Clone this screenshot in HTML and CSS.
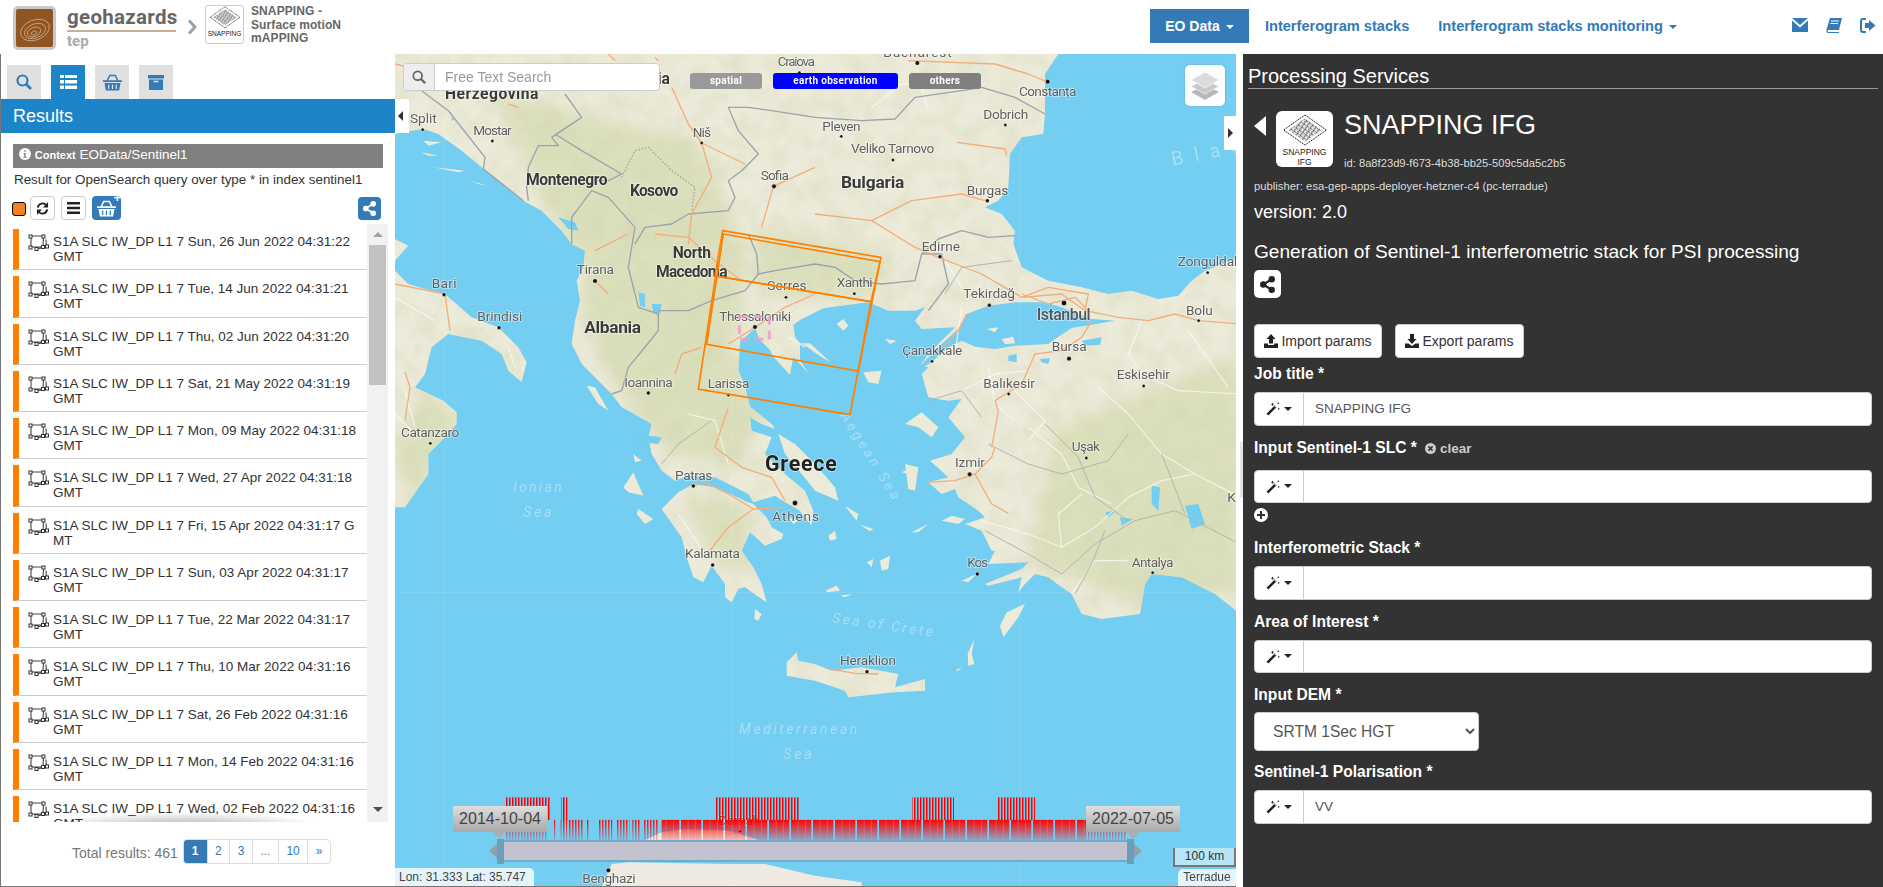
FILE: index.html
```html
<!DOCTYPE html>
<html lang="en">
<head>
<meta charset="utf-8">
<title>Geohazards TEP - SNAPPING</title>
<link rel="stylesheet" href="styles.css">
</head>
<body>
<svg class="defs" width="0" height="0" aria-hidden="true">
  <defs>
    <symbol id="i-wand" viewBox="0 0 16 16"><path d="M1.5 14.5 10.5 5.5" stroke="currentColor" stroke-width="2.8" fill="none"/><path d="M9.5 6.5 11 5" stroke="#fff" stroke-width="1.2"/><path d="M7 1.5 7.6 3 9 3.5 7.6 4 7 5.5 6.4 4 5 3.5 6.4 3ZM13 1l.4 1 1 .4-1 .4-.4 1-.4-1-1-.4 1-.4ZM13.5 7l.4 1 1 .4-1 .4-.4 1-.4-1-1-.4 1-.4Z" fill="currentColor"/></symbol>
    <symbol id="i-poly" viewBox="0 0 21 17"><path d="M3 2H15.5L15 13H3ZM18 5.500 18.500 13 8 15" fill="none" stroke="#444" stroke-width="1.100"/><g fill="#fff" stroke="#333" stroke-width="1"><rect x="1" y="1" width="3" height="3"/><rect x="14" y="1" width="3" height="3"/><rect x="1" y="12" width="3" height="3"/><rect x="13.500" y="11.500" width="3" height="3"/><rect x="7" y="13.500" width="3" height="3"/><rect x="17.500" y="11" width="3" height="3"/></g></symbol>
    <symbol id="i-share" viewBox="0 0 16 16"><path d="M12 3 4 8l8 5" stroke="currentColor" stroke-width="2" fill="none"/><circle cx="12" cy="3" r="3" fill="currentColor"/><circle cx="4" cy="8" r="3" fill="currentColor"/><circle cx="12" cy="13" r="3" fill="currentColor"/></symbol>
    <symbol id="i-basket" viewBox="0 0 20 18"><path d="M4.500 7 7 1.500h6L15.500 7" fill="none" stroke="currentColor" stroke-width="1.500"/><path d="M0 6.500H20V8.500H0ZM1.500 9.500H18.500L17 17.500H3Z" fill="currentColor"/><path d="M6 11V16M10 11V16M14 11V16" stroke="var(--basket-gap,#e0e0e0)" stroke-width="1.300"/></symbol>
    <symbol id="i-logo" viewBox="0 0 100 70"><path d="M50 2 94 33 50 64 6 33Z" fill="#fff" stroke="#111" stroke-width="2" stroke-dasharray="3 1.500"/><path d="M50 9 84 33 50 57 16 33Z" fill="url(#lattice)"/></symbol>
    <pattern id="lattice" width="8" height="8" patternUnits="userSpaceOnUse" patternTransform="rotate(35)"><path d="M0 1.500H5M1 5.500H8M3 3V7" stroke="#111" stroke-width="1.300" fill="none"/></pattern>
  </defs>
</svg>

<header class="topbar">
  <div class="brand">
    <div class="brand-logo">
      <svg viewBox="0 0 36 36" width="36" height="36"><g fill="none" stroke="#d9b799" stroke-width=".7"><ellipse cx="18" cy="20" rx="15" ry="10" transform="rotate(-22 18 20)"/><ellipse cx="18" cy="21" rx="11" ry="7" transform="rotate(-22 18 21)"/><ellipse cx="17" cy="22" rx="7" ry="4.500" transform="rotate(-22 17 22)"/><ellipse cx="17" cy="23" rx="3" ry="1.800" transform="rotate(-22 17 23)"/></g></svg>
    </div>
    <div class="brand-name">
      <div class="brand-geo">geohazards</div>
      <div class="brand-tep">tep</div>
    </div>
    <svg class="brand-chev" viewBox="0 0 10 16" width="10" height="16"><path d="M2 1.500 8 8 2 14.500" fill="none" stroke="#9aa3ab" stroke-width="3"/></svg>
    <div class="app-logo">
      <svg viewBox="0 0 100 70" width="34" height="24"><use href="#i-logo"/></svg>
      <span class="app-logo-t">SNAPPING</span>
    </div>
    <div class="app-name">SNAPPING -<br>Surface motioN<br>mAPPING</div>
  </div>
  <nav class="nav">
    <a class="nav-btn">EO Data <i class="caret"></i></a>
    <a class="nav-link">Interferogram stacks</a>
    <a class="nav-link nav-link2">Interferogram stacks monitoring <i class="caret"></i></a>
    <span class="nav-icons">
      <svg viewBox="0 0 16 14" width="16" height="14"><path d="M0 0H16L8 7ZM0 2.500 8 9.500 16 2.500V14H0Z" fill="#337ab7"/></svg>
      <svg viewBox="0 0 16 15" width="16" height="15"><path d="M4 0H16L13 12H2.500Q1 12 2 14H13V15H1.500Q-.5 13.500 1 10Z" fill="#337ab7"/><path d="M5 3H13M4.500 5.500H12" stroke="#fff"/></svg>
      <svg viewBox="0 0 16 15" width="16" height="15"><path d="M6 1H3Q1 1 1 3V12Q1 14 3 14H6" fill="none" stroke="#337ab7" stroke-width="2"/><path d="M9 2 15.500 7.500 9 13V10H5V5H9Z" fill="#337ab7"/></svg>
    </span>
  </nav>
</header>

<main class="main">
  <section class="left">
    <div class="tabs">
      <span class="tab"><svg viewBox="0 0 16 16" width="16" height="16"><circle cx="6.500" cy="6.500" r="5" fill="none" stroke="#337ab7" stroke-width="2.200"/><path d="M10 10 15 15" stroke="#337ab7" stroke-width="2.600"/></svg></span>
      <span class="tab tab-on"><svg viewBox="0 0 17 14" width="17" height="14"><path d="M0 0H4V3H0ZM5 0H17V3H5ZM0 5H4V8.500H0ZM5 5H17V8.500H5ZM0 10.500H4V14H0ZM5 10.500H17V14H5Z" fill="#fff"/></svg></span>
      <span class="tab tab-blue"><svg width="19" height="17"><use href="#i-basket"/></svg></span>
      <span class="tab"><svg viewBox="0 0 16 15" width="16" height="15"><path d="M0 0H16V3.500H0ZM1 4.500H15V15H1Z" fill="#337ab7"/><path d="M5.500 6.500H10.500" stroke="#e0e0e0" stroke-width="1.500"/></svg></span>
    </div>
    <h2 class="results-bar">Results</h2>
    <div class="context"><svg viewBox="0 0 16 16" width="12" height="12"><circle cx="8" cy="8" r="8" fill="#fff"/><path d="M6 6.500H9V12H10.500V13H5.500V12H7V7.500H6ZM7 3H9V5H7Z" fill="#808080"/></svg> <b>Context</b> <span>EOData/Sentinel1</span></div>
    <p class="query">Result for OpenSearch query over type * in index sentinel1</p>
    <div class="toolbar">
      <span class="check"></span>
      <span class="tbtn"><svg viewBox="0 0 14 14" width="13" height="13"><path d="M2 6A5 5 0 0 1 11 3.500M12 8A5 5 0 0 1 3 10.500" fill="none" stroke="#222" stroke-width="2"/><path d="M13 0V6H7.500ZM1 14V8H6.500Z" fill="#222"/></svg></span>
      <span class="tbtn"><svg viewBox="0 0 13 12" width="13" height="12"><path d="M0 0H13V2.400H0ZM0 4.800H13V7.200H0ZM0 9.600H13V12H0Z" fill="#222"/></svg></span>
      <span class="tbtn-basket"><svg width="19" height="17"><use href="#i-basket"/></svg><b>+</b></span>
      <span class="tbtn-share"><svg width="15" height="15"><use href="#i-share"/></svg></span>
    </div>
    <div class="listwrap">
      <ul class="list">
        <li><svg width="21" height="17"><use href="#i-poly"/></svg><span>S1A SLC IW_DP L1 7 Sun, 26 Jun 2022 04:31:22<br>GMT</span></li>
        <li><svg width="21" height="17"><use href="#i-poly"/></svg><span>S1A SLC IW_DP L1 7 Tue, 14 Jun 2022 04:31:21<br>GMT</span></li>
        <li><svg width="21" height="17"><use href="#i-poly"/></svg><span>S1A SLC IW_DP L1 7 Thu, 02 Jun 2022 04:31:20<br>GMT</span></li>
        <li><svg width="21" height="17"><use href="#i-poly"/></svg><span>S1A SLC IW_DP L1 7 Sat, 21 May 2022 04:31:19<br>GMT</span></li>
        <li><svg width="21" height="17"><use href="#i-poly"/></svg><span>S1A SLC IW_DP L1 7 Mon, 09 May 2022 04:31:18<br>GMT</span></li>
        <li><svg width="21" height="17"><use href="#i-poly"/></svg><span>S1A SLC IW_DP L1 7 Wed, 27 Apr 2022 04:31:18<br>GMT</span></li>
        <li><svg width="21" height="17"><use href="#i-poly"/></svg><span>S1A SLC IW_DP L1 7 Fri, 15 Apr 2022 04:31:17 G<br>MT</span></li>
        <li><svg width="21" height="17"><use href="#i-poly"/></svg><span>S1A SLC IW_DP L1 7 Sun, 03 Apr 2022 04:31:17<br>GMT</span></li>
        <li><svg width="21" height="17"><use href="#i-poly"/></svg><span>S1A SLC IW_DP L1 7 Tue, 22 Mar 2022 04:31:17<br>GMT</span></li>
        <li><svg width="21" height="17"><use href="#i-poly"/></svg><span>S1A SLC IW_DP L1 7 Thu, 10 Mar 2022 04:31:16<br>GMT</span></li>
        <li><svg width="21" height="17"><use href="#i-poly"/></svg><span>S1A SLC IW_DP L1 7 Sat, 26 Feb 2022 04:31:16<br>GMT</span></li>
        <li><svg width="21" height="17"><use href="#i-poly"/></svg><span>S1A SLC IW_DP L1 7 Mon, 14 Feb 2022 04:31:16<br>GMT</span></li>
        <li><svg width="21" height="17"><use href="#i-poly"/></svg><span>S1A SLC IW_DP L1 7 Wed, 02 Feb 2022 04:31:16<br>GMT</span></li>
      </ul>
      <div class="sbar"><i class="sb-up"></i><i class="sb-thumb"></i><i class="sb-down"></i></div>
    </div>
    <div class="pager-row">
      <span class="total">Total results: 461</span>
      <span class="pager"><a class="on">1</a><a>2</a><a>3</a><a class="dim">...</a><a>10</a><a>»</a></span>
    </div>
  </section>

  <section class="map">
    <svg class="basemap" viewBox="0 0 2535 2499" width="841" height="833" preserveAspectRatio="xMinYMin slice">
      <defs>
        <filter id="blur" x="-20%" y="-20%" width="140%" height="140%"><feGaussianBlur stdDeviation="22"/></filter>
        <filter id="noise" x="0" y="0" width="100%" height="100%">
          <feTurbulence type="fractalNoise" baseFrequency=".016" numOctaves="4" seed="7"/>
          <feColorMatrix values="0 0 0 0 .62  0 0 0 0 .66  0 0 0 0 .42  1.800 0 0 0 -.72"/>
        </filter>
        <clipPath id="landclip">
          <use href="#mainland"/><use href="#pelop"/><use href="#italy"/><use href="#crete"/>
        </clipPath>
        <pattern id="sparse" width="9" height="20" patternUnits="userSpaceOnUse"><rect width="4.500" height="20" fill="#f00"/></pattern>
        <pattern id="dense" width="66" height="20" patternUnits="userSpaceOnUse"><rect width="61" height="20" fill="#f00"/><rect x="20" width="3" height="20" fill="#e33"/><rect x="42" width="3" height="20" fill="#e33"/></pattern>
        <linearGradient id="fade" x1="0" y1="0" x2="0" y2="1"><stop offset="0" stop-color="#fff"/><stop offset="1" stop-color="#fff" stop-opacity=".1"/></linearGradient>
        <mask id="fademask" maskUnits="userSpaceOnUse" x="0" y="2290" width="2535" height="80"><rect y="2297" width="2535" height="68" fill="url(#fade)"/></mask>
      </defs>

      <rect class="sea" width="2535" height="2499"/>

      <g class="land">
        <path id="mainland" d="M0 0H1990L1950 60 1950 180 1945 240 1880 250 1845 300 1840 400 1810 440 1770 460 1820 480 1860 530 1855 570 1880 640 1960 680 2060 700 2140 720 2210 710 2290 735 2350 725 2390 680 2430 650 2535 610V1680L2460 1620 2360 1570 2270 1560 2250 1590 2235 1680 2120 1695 2060 1680 2030 1620 2000 1600 1960 1570 1920 1560 1890 1590 1870 1615 1880 1570 1780 1595 1770 1590 1880 1545 1900 1525 1780 1530 1800 1490 1790 1490 1760 1430 1710 1410 1770 1390 1750 1370 1690 1330 1680 1305 1640 1320 1600 1285 1660 1270 1605 1220 1670 1200 1710 1150 1660 1090 1700 1035 1660 1040 1600 1030 1580 960 1600 940 1575 935 1600 900 1650 850 1680 820 1580 825 1560 800 1590 760 1560 770 1480 770 1420 745 1395 748 1355 753 1285 763 1215 798 1195 813 1200 848 1215 868 1235 878 1285 913 1305 923 1245 868 1215 868 1215 918 1240 958 1195 908 1185 963 1135 908 1125 888 1095 858 1080 823 1035 863 1030 948 1050 998 1065 1058 1130 1110 1140 1125 1100 1110 1065 1090 1070 1130 1130 1150 1110 1200 1170 1260 1230 1310 1255 1370 1250 1415 1215 1370 1170 1345 1140 1325 1075 1345 1060 1320 960 1270 880 1265 840 1280 800 1250 770 1200 760 1150 770 1110 700 1070 680 1060 650 1020 620 990 560 930 530 870 540 800 555 740 545 680 565 640 570 590 530 570 500 530 440 470 385 440 310 380 260 340 200 290 130 240 85 225 50 230 0 240Z"/>
        <path id="pelop" d="M1075 1350 1115 1390 1130 1420 1165 1440 1160 1455 1110 1475 1065 1435 1040 1490 1075 1540 1100 1590 1115 1645 1085 1625 1050 1600 1030 1605 1010 1645 990 1630 990 1590 950 1535 925 1585 895 1570 875 1510 860 1450 800 1365 850 1315 895 1290 960 1300 1060 1345Z"/>
        <path id="italy" d="M0 650 40 690 110 710 150 720 230 790 310 820 370 880 395 925 380 985 340 950 320 900 260 860 160 840 110 880 90 960 60 1000 145 1040 185 1075 185 1110 130 1170 100 1200 100 1260 30 1360H0ZM0 555 40 575 0 620Z"/>
        <path id="crete" d="M1175 1825 1205 1795 1210 1820 1260 1830 1310 1850 1400 1840 1510 1860 1500 1900 1590 1875 1590 1910 1500 1915 1360 1930 1350 1910 1260 1880 1175 1865Z"/>
        <path d="M575 995 600 1000 640 1070 610 1050ZM715 1255 745 1325 700 1315 685 1300ZM715 1200 740 1220 720 1225ZM730 1365 775 1395 750 1410 725 1380ZM1080 1665 1100 1680 1090 1700 1078 1695ZM1530 1230 1570 1240 1560 1310 1540 1305ZM1530 1110 1580 1075 1630 1120 1610 1150 1570 1120ZM1405 955 1460 950 1450 990 1420 985ZM1325 810 1345 795 1360 815 1345 830ZM1470 855 1505 860 1485 870ZM1640 1400 1670 1385 1710 1395 1690 1410ZM1550 1435 1600 1410 1570 1435ZM1700 1580 1745 1560 1720 1585ZM1455 1520 1485 1505 1480 1545 1460 1550ZM1415 1525 1435 1515 1430 1540ZM1350 1355 1390 1380 1385 1400 1365 1375ZM1395 1412 1435 1425 1425 1432ZM1890 1650 1870 1690 1825 1750 1815 1715 1835 1675ZM1738 1755 1730 1800 1738 1830 1720 1835 1718 1800ZM1680 1850 1700 1840 1690 1850ZM1150 1140 1200 1170 1260 1230 1320 1300 1330 1340 1295 1325 1260 1310 1220 1260 1170 1200ZM85 260 140 265 100 275ZM80 295 130 305 100 305ZM115 340 210 350 190 355ZM225 380 280 395 250 390ZM1520 1255 1540 1245 1540 1260ZM1300 1445 1320 1430 1325 1455 1305 1460ZM1180 1390 1210 1400 1195 1410ZM1290 1610 1325 1595 1335 1610 1300 1615ZM1335 1625 1370 1620 1350 1630Z"/>
        <path class="libya" d="M650 2430 700 2425 1000 2430 1110 2430 1260 2465 1400 2485V2499H620ZM735 2365 800 2335 870 2325 1000 2330 1100 2360 1110 2370H730Z"/>
      </g>

      <g clip-path="url(#landclip)">
        <g class="terrain" filter="url(#blur)">
          <path d="M300 120 900 260 1060 600 1010 900 1100 1060 1030 1250 800 1180 650 980 560 800 580 640 450 460Z"/>
          <path d="M1080 520 1480 610 1440 720 1100 720Z"/>
          <path d="M1980 1130 2535 900V1600L2250 1660 1900 1520Z"/>
          <path d="M860 1330 1060 1350 1060 1560 960 1500Z"/>
          <path d="M90 1000 190 1100 60 1350 0 1200Z"/>
        </g>
        <rect class="noise" width="2535" height="2499" filter="url(#noise)"/>
      </g>

      <path class="sea" d="M1780 755 1860 745 1950 745 2000 760 2090 795 2160 800 2090 812 2030 822 1980 855 1960 870 1860 875 1800 885 1740 878 1700 860 1660 880 1610 925 1585 940 1575 935 1640 870 1690 825 1715 780ZM720 1140 800 1150 790 1170 730 1165ZM730 715 750 720 750 760 735 755ZM770 750 800 750 795 780 775 775ZM490 490 540 505 550 530 520 525ZM170 190 180 195 170 200ZM2270 1295 2295 1300 2290 1370 2270 1350ZM2370 1355 2410 1350 2430 1410 2390 1425ZM2130 1375 2165 1370 2140 1390ZM2175 1390 2215 1395 2180 1415ZM2060 860 2120 850 2115 872 2070 875ZM1935 915 1965 912 1960 930 1940 925ZM1840 905 1865 900 1865 925 1840 920Z"/>
      <path class="land-fill" d="M1775 825 1810 820 1800 835ZM1820 855 1855 848 1860 868 1830 870Z"/>

      <g class="minor">
        <path d="M1650 620 1700 700M1700 760 1680 900M1780 940 1800 1050 1860 1100M2110 1000 2200 1080 2300 1200 2400 1260M1900 1120 2000 1200 2050 1300 2150 1350M1760 1400 1900 1440 2000 1480 2100 1420 2200 1330 2300 1280 2400 1260 2535 1330M2030 1620 2100 1520 2200 1520M1850 1000 1950 1100 1900 1160M2240 800 2200 900 2240 960 2350 1010 2535 1020M2380 830 2450 930 2500 1000M2000 1480 1990 1380 2060 1320M880 1080 960 1100 1000 1230M1180 850 1230 880M1700 1010 1800 960 1900 950M1430 160 1520 90 1660 100M1570 70 1600 170M0 730 120 800M0 1080 60 1140M30 1010 60 1120M340 880 360 940M850 1380 930 1500"/>
      </g>

      <g class="border">
        <path d="M80 110 160 170 215 240 270 310 265 345 310 380 385 440M510 120 560 190 500 230 470 250 490 275 430 275 400 340 395 400 400 440M480 240 560 290 680 360 640 380 590 380M530 570 530 490 590 410 640 430 720 520 700 640 730 760 790 780 790 830 700 940 680 1010 650 1020M720 570 750 520 830 510 880 480 1000 470 1020 430 1000 380 1040 350 1090 300 1030 230 1000 160 1060 160 1130 170 1260 190 1400 200 1500 195 1560 130 1700 110 1760 100 1860 130 1950 180M790 770 880 770 950 740 1050 710 1090 660 1085 600 1060 540M1090 660 1140 650 1260 630 1320 640 1380 680 1460 690 1560 680 1580 600 1640 600 1660 690 1600 770M1580 600 1630 555 1700 530 1780 550 1860 545"/>
        <path class="dash" d="M680 370 720 290 760 280 830 350 900 400 890 470"/>
        <path class="prov" d="M1770 1430 1900 1500 2000 1560 2100 1470 2220 1400 2340 1370 2535 1470M1950 1110 2050 1210 2100 1330 2200 1400M2300 1200 2370 1380M1900 1230 2000 1260 2140 1220 2200 1140M1780 1170 1900 1230M2130 1430 2090 1530 2040 1620M1600 1040 1700 1010 1760 1090M800 1230 850 1170 950 1100M1650 720 1700 640 1850 620"/>
      </g>

      <g class="road">
        <path d="M1135 397 1100 520M920 267 950 370 890 480 880 570M920 267 1050 330M830 100 880 210 920 267M0 690 150 720 165 830M700 540 600 590M1135 397 1260 340M640 0 660 20M780 10 790 20M1000 870 1080 820 1170 760 1260 720M920 880 860 900 840 960M780 540 880 550 960 620 1040 680M600 680 640 720M1260 480 1430 500 1560 580 1630 610 1760 660 1880 730 2000 720 2070 770 2170 790 2260 800 2340 780 2410 800 2535 810M1430 500 1550 440 1700 420 1770 440M1540 20 1800 30 1900 60 1960 85M1685 265 1830 285 1835 305M1880 990 1920 900 2000 890 2060 850 2090 800M1790 1180 1810 1070 1800 1040 1880 990M1600 1285 1680 1280 1740 1260 1790 1210 1800 1180M1740 1260 1790 1350 1840 1378M1715 780 1690 830 1645 880M1170 1360 1075 1365 1000 1320 930 1285 895 1295M1075 1365 1000 1420 960 1470 945 1490M1305 1845 1380 1858 1450 1860M30 955 45 1000 30 1100M1000 1060 960 1180 1040 1240 1130 1270 1170 1340M0 30 80 50M340 150 370 160M1880 720 1960 750 2040 730 2080 770M1880 730 1960 700 2080 720 2070 770"/>
      </g>

      <g class="grid"><path d="M150 0V2499M1010 0V2499M1877 0V2499M0 750H2535M0 1615H2535M0 2480H2535"/></g>

      <g class="names">
        <text class="city" x="1148" y="35" textLength="112">Craiova</text>
        <text class="city" x="1465" y="8" textLength="205">Bucharest</text>
        <text class="ctry" x="690" y="91" textLength="135">Serbia</text>
        <text class="ctry" x="150" y="135" textLength="280">Herzegovina</text>
        <text class="city" x="45" y="208" textLength="80">Split</text>
        <text class="city" x="235" y="243" textLength="115">Mostar</text>
        <text class="city" x="893" y="248" textLength="55">Niš</text>
        <text class="ctry" x="393" y="393" textLength="245">Montenegro</text>
        <text class="ctry" x="705" y="425" textLength="145">Kosovo</text>
        <text class="city" x="1097" y="377" textLength="85">Sofia</text>
        <text class="ctry" x="833" y="612" textLength="115">North</text>
        <text class="ctry" x="783" y="668" textLength="215">Macedonia</text>
        <text class="city" x="545" y="660" textLength="112">Tirana</text>
        <text class="city" x="110" y="703" textLength="75">Bari</text>
        <text class="city" x="247" y="802" textLength="135">Brindisi</text>
        <text class="ctry ctry-l" x="568" y="838" textLength="170">Albania</text>
        <text class="city" x="688" y="998" textLength="145">Ioannina</text>
        <text class="city" x="938" y="1003" textLength="125">Larissa</text>
        <text class="city" x="18" y="1148" textLength="175">Catanzaro</text>
        <text class="city" x="1117" y="708" textLength="118">Serres</text>
        <text class="city" x="973" y="800" textLength="215">Thessaloniki</text>
        <text class="city" x="1872" y="127" textLength="172">Constanța</text>
        <text class="city" x="1765" y="195" textLength="135">Dobrich</text>
        <text class="city" x="1282" y="230" textLength="115">Pleven</text>
        <text class="city" x="1368" y="298" textLength="250">Veliko Tarnovo</text>
        <text class="ctry ctry-l" x="1338" y="402" textLength="190">Bulgaria</text>
        <text class="city" x="1715" y="422" textLength="125">Burgas</text>
        <text class="city" x="1580" y="590" textLength="115">Edirne</text>
        <text class="city" x="1325" y="700" textLength="108">Xanthi</text>
        <text class="city" x="1705" y="733" textLength="155">Tekirdağ</text>
        <text class="big" x="1925" y="797" textLength="162">Istanbul</text>
        <text class="city" x="2348" y="637" textLength="190">Zonguldak</text>
        <text class="city" x="2373" y="783" textLength="80">Bolu</text>
        <text class="city" x="1522" y="902" textLength="180">Çanakkale</text>
        <text class="city" x="1970" y="892" textLength="105">Bursa</text>
        <text class="city" x="2165" y="975" textLength="160">Eskisehir</text>
        <text class="city" x="1765" y="1002" textLength="155">Balıkesir</text>
        <text class="city" x="2030" y="1192" textLength="85">Uşak</text>
        <text class="city" x="840" y="1278" textLength="112">Patras</text>
        <text class="city" x="870" y="1512" textLength="165">Kalamata</text>
        <text class="city" x="1132" y="1400" textLength="140">Athens</text>
        <text class="greece" x="1110" y="1250" textLength="215">Greece</text>
        <text class="city" x="1680" y="1240" textLength="90">Izmir</text>
        <text class="city" x="1717" y="1540" textLength="62">Kos</text>
        <text class="city" x="2210" y="1540" textLength="125">Antalya</text>
        <text class="city" x="2497" y="1345" textLength="110">Konya</text>
        <text class="city" x="1335" y="1834" textLength="168">Heraklion</text>
        <text class="city" x="562" y="2486" textLength="160">Benghazi</text>
        <text class="city" x="970" y="2312" textLength="125">Darnah</text>
        <text class="wsea" x="355" y="1315" textLength="145">Ionian</text>
        <text class="wsea" x="385" y="1388" textLength="85">Sea</text>
        <text class="wsea" x="1032" y="2040" textLength="355">Mediterranean</text>
        <text class="wsea" x="1165" y="2115" textLength="85">Sea</text>
        <text class="wsea" x="0" y="0" textLength="305" transform="translate(1310 1705) rotate(8)">Sea of Crete</text>
        <text class="wsea" x="0" y="0" textLength="300" transform="translate(1335 1085) rotate(58)">Aegean Sea</text>
        <text class="wsea wsea-l" x="0" y="0" textLength="275" transform="translate(2333 335) rotate(-11)">Black</text>
      </g>

      <g class="dots">
        <circle cx="83" cy="227" r="5"/><circle cx="292" cy="261" r="5"/><circle cx="920" cy="267" r="5"/><circle cx="1137" cy="397" r="7"/><circle cx="600" cy="681" r="7"/><circle cx="147" cy="722" r="6"/><circle cx="312" cy="821" r="6"/><circle cx="760" cy="1017" r="6"/><circle cx="1000" cy="1023" r="5"/><circle cx="106" cy="1168" r="5"/><circle cx="1173" cy="730" r="5"/><circle cx="1080" cy="819" r="7"/><circle cx="1213" cy="56" r="5"/><circle cx="1567" cy="27" r="7"/><circle cx="1958" cy="83" r="7"/><circle cx="1831" cy="213" r="5"/><circle cx="1339" cy="247" r="5"/><circle cx="1494" cy="318" r="5"/><circle cx="1777" cy="440" r="6"/><circle cx="1635" cy="608" r="6"/><circle cx="1378" cy="719" r="5"/><circle cx="1783" cy="754" r="6"/><circle cx="2007" cy="747" r="8"/><circle cx="2438" cy="656" r="5"/><circle cx="2411" cy="800" r="5"/><circle cx="1611" cy="922" r="5"/><circle cx="2022" cy="914" r="7"/><circle cx="2246" cy="996" r="5"/><circle cx="1841" cy="1020" r="5"/><circle cx="895" cy="1296" r="6"/><circle cx="953" cy="1533" r="6"/><circle cx="1200" cy="1347" r="8"/><circle cx="1724" cy="1261" r="7"/><circle cx="1747" cy="1560" r="6"/><circle cx="2273" cy="1556" r="5"/><circle cx="1416" cy="1853" r="6"/><circle cx="640" cy="2449" r="7"/><circle cx="1035" cy="2332" r="5"/><circle cx="2074" cy="1212" r="5"/>
      </g>

      <g class="fp">
        <path class="fp-box" d="M1033 788H1123V856H1033Z"/>
        <path d="M983 530 1458 610 1428 743 960 666Z"/>
        <path d="M985 540 1455 623 1390 951 935 871Z"/>
        <path d="M962 666 1428 743 1365 1082 910 1005Z"/>
      </g>

      <g class="bars-tall">
        <rect x="333" y="2230" width="132" height="68"/><rect x="498" y="2230" width="20" height="68"/><rect x="960" y="2230" width="255" height="68"/><rect x="1551" y="2230" width="126" height="68"/><rect x="1807" y="2230" width="113" height="68"/>
      </g>
      <g mask="url(#fademask)">
        <g class="bars-sp">
          <rect x="333" y="2297" width="122" height="68"/><rect x="475" y="2297" width="6" height="68"/><rect x="497" y="2297" width="20" height="68"/><rect x="520" y="2297" width="47" height="68"/><rect x="575" y="2297" width="6" height="68"/><rect x="610" y="2297" width="42" height="68"/><rect x="665" y="2297" width="38" height="68"/><rect x="712" y="2297" width="24" height="68"/><rect x="745" y="2297" width="46" height="68"/><rect x="2070" y="2297" width="125" height="68"/>
        </g>
        <rect class="bars-de" x="800" y="2297" width="1270" height="68"/>
      </g>
    </svg>

    <div class="search">
      <span class="search-ic"><svg viewBox="0 0 16 16" width="14" height="14"><circle cx="6.500" cy="6.500" r="5" fill="none" stroke="#666" stroke-width="2"/><path d="M10 10 15 15" stroke="#666" stroke-width="2.500"/></svg></span>
      <span class="search-in">Free Text Search</span>
    </div>
    <div class="tags">
      <span class="tag tag-s">spatial</span>
      <span class="tag tag-e">earth observation</span>
      <span class="tag tag-o">others</span>
    </div>
    <button class="toggle toggle-l" aria-label="collapse left"></button>
    <button class="toggle toggle-r" aria-label="collapse right"></button>
    <div class="layers">
      <svg viewBox="0 0 30 30" width="30" height="30"><path d="M15 14 29 21 15 29 1 21Z" fill="#b8b8b8"/><path d="M15 8 29 15.500 15 23 1 15.500Z" fill="#c9c9c9" stroke="#fff" stroke-width=".6"/><path d="M15 1 29 9 15 17 1 9Z" fill="#dcdcdc" stroke="#fff" stroke-width=".6"/></svg>
    </div>

    <div class="tl-label tl-label-a">2014-10-04</div>
    <div class="tl-label tl-label-b">2022-07-05</div>
    <div class="tl-bar"></div>
    <i class="tl-handle tl-handle-a"></i>
    <i class="tl-handle tl-handle-b"></i>
    <i class="tl-arrow tl-arrow-a"></i>
    <i class="tl-arrow tl-arrow-b"></i>
    <div class="coords">Lon: 31.333 Lat: 35.747</div>
    <div class="scale">100 km</div>
    <div class="attr">Terradue</div>
  </section>

  <div class="split"><i></i></div>

  <section class="right">
    <h3 class="ps-title">Processing Services</h3>
    <div class="svc">
      <svg class="svc-back" viewBox="0 0 12 20" width="12" height="20"><path d="M12 0V20L0 10Z" fill="#fff"/></svg>
      <div class="svc-icon">
        <svg viewBox="0 0 100 70" width="50" height="35"><use href="#i-logo"/></svg>
        <span>SNAPPING<br>IFG</span>
      </div>
      <div class="svc-head">
        <div class="svc-name">SNAPPING IFG</div>
        <div class="svc-id">id: 8a8f23d9-f673-4b38-bb25-509c5da5c2b5</div>
      </div>
    </div>
    <div class="publisher">publisher: esa-gep-apps-deployer-hetzner-c4 (pc-terradue)</div>
    <div class="version">version: 2.0</div>
    <div class="desc">Generation of Sentinel-1 interferometric stack for PSI processing</div>
    <div class="svc-share"><svg width="17" height="17"><use href="#i-share"/></svg></div>
    <div class="actions">
      <span class="act"><svg viewBox="0 0 14 14" width="14" height="14"><path d="M7 0 11.500 5H9V9.500H5V5H2.500ZM0 9.500H4V11H10V9.500H14V14H0Z" fill="#222"/></svg>Import params</span>
      <span class="act act2"><svg viewBox="0 0 14 14" width="14" height="14"><path d="M5 0H9V5H11.500L7 10 2.500 5H5ZM0 9.500H3.500L7 12 10.500 9.500H14V14H0Z" fill="#222"/></svg>Export params</span>
    </div>
    <label class="lbl">Job title *</label>
    <div class="ig"><span class="ig-add"><svg width="15" height="15"><use href="#i-wand"/></svg><i class="caret"></i></span><span class="ig-in">SNAPPING IFG</span></div>
    <label class="lbl lbl-clear">Input Sentinel-1 SLC * <span class="clear"><svg viewBox="0 0 12 12" width="11" height="11"><circle cx="6" cy="6" r="6" fill="#ccc"/><path d="M3.700 3.700 8.300 8.300M8.300 3.700 3.700 8.300" stroke="#333" stroke-width="1.600"/></svg> clear</span></label>
    <div class="ig"><span class="ig-add"><svg width="15" height="15"><use href="#i-wand"/></svg><i class="caret"></i></span><span class="ig-in"></span></div>
    <div class="plus"><svg viewBox="0 0 14 14" width="14" height="14"><circle cx="7" cy="7" r="7" fill="#fff"/><path d="M7 3V11M3 7H11" stroke="#333" stroke-width="2"/></svg></div>
    <label class="lbl lbl-3">Interferometric Stack *</label>
    <div class="ig"><span class="ig-add"><svg width="15" height="15"><use href="#i-wand"/></svg><i class="caret"></i></span><span class="ig-in"></span></div>
    <label class="lbl">Area of Interest *</label>
    <div class="ig"><span class="ig-add"><svg width="15" height="15"><use href="#i-wand"/></svg><i class="caret"></i></span><span class="ig-in"></span></div>
    <label class="lbl">Input DEM *</label>
    <select class="dem"><option>SRTM 1Sec HGT</option></select>
    <label class="lbl lbl-after">Sentinel-1 Polarisation *</label>
    <div class="ig"><span class="ig-add"><svg width="15" height="15"><use href="#i-wand"/></svg><i class="caret"></i></span><span class="ig-in">VV</span></div>
  </section>
</main>
</body>
</html>
```
FILE: styles.css
```css
* { box-sizing: border-box; }
html, body { margin: 0; padding: 0; height: 887px; overflow: hidden; background: #fff; }
body { font-family: "Liberation Sans", Arial, sans-serif; font-size: 14px; color: #333; }
.defs { position: absolute; }
.caret { display: inline-block; width: 0; height: 0; border-left: 4px solid transparent; border-right: 4px solid transparent; border-top: 4px solid currentColor; vertical-align: middle; margin-left: 2px; }

/* header */
.topbar { height: 54px; display: flex; justify-content: space-between; background: #fff; }
.brand { display: flex; align-items: flex-start; padding-left: 13px; }
.brand-logo { width: 43px; height: 44px; margin-top: 6px; background: #8f5624; border: 3px solid #c8c8c8; border-radius: 5px; display: flex; align-items: center; justify-content: center; }
.brand-name { margin-left: 11px; width: 109px; margin-top: 4px; }
.brand-geo { font: bold 20.500px/26px "Roboto", "Liberation Sans", sans-serif; color: #666; border-bottom: 2px solid #c9ae96; height: 28px; letter-spacing: .3px; }
.brand-tep { font: bold 15px/19px "Roboto", "Liberation Sans", sans-serif; color: #aaa; }
.brand-chev { margin: 19px 0 0 11px; }
.app-logo { width: 39px; height: 39px; margin: 5px 0 0 8px; border: 1px solid #ccc; border-radius: 3px; display: flex; flex-direction: column; align-items: center; overflow: hidden; }
.app-logo-t { font-size: 6.500px; line-height: 8px; color: #222; }
.app-name { margin: 5px 0 0 7px; font-size: 12px; line-height: 13.500px; font-weight: bold; color: #666; letter-spacing: .1px; }
.nav { display: flex; align-items: flex-start; padding-right: 7px; font-weight: bold; font-size: 14.600px; }
.nav-btn { margin-top: 9px; width: 99px; height: 34px; background: #337ab7; color: #fff; line-height: 34px; text-align: center; font-size: 14px; }
.nav-link { margin: 9px 0 0 16px; line-height: 34px; color: #337ab7; }
.nav-link2 { margin-left: 29px; }
.nav-icons { margin: 18px 0 0 115px; display: flex; gap: 18px; }

/* layout */
.main { height: 833px; display: flex; }
.left { width: 395px; flex: none; height: 833px; border-left: 1px solid #777; border-bottom: 1px solid #777; display: flex; flex-direction: column; background: #fff; }
.map { width: 841px; flex: none; height: 833px; position: relative; overflow: hidden; background: #73cef1; border-bottom: 1px solid #777; }
.split { width: 7px; flex: none; padding-top: 388px; display: flex; justify-content: flex-end; background: #fff; }
.split i { display: block; width: 3px; height: 56px; background: #e6e6e6; }
.right { width: 640px; flex: none; height: 833px; background: #333; color: #fff; padding: 0 11px; display: flex; flex-direction: column; }

/* left panel */
.tabs { display: flex; gap: 10px; padding: 11px 0 0 6px; height: 45px; }
.tab { width: 34px; height: 34px; background: #e0e0e0; display: flex; align-items: center; justify-content: center; }
.tab-on { background: #1c84c9; }
.tab-blue { color: #337ab7; }
.results-bar { margin: 0; height: 34px; background: #1c84c9; color: #fff; font-size: 18px; font-weight: normal; line-height: 35px; padding-left: 12px; }
.context { margin: 11px 12px 0 12px; height: 24px; background: #808080; color: #fff; line-height: 21px; padding-left: 6px; font-size: 13.500px; }
.context svg { vertical-align: -1px; }
.context b { font-size: 11px; }
.query { margin: 2px 0 0 13px; font-size: 13.400px; line-height: 20px; color: #333; white-space: nowrap; }
.toolbar { display: flex; align-items: flex-start; height: 28px; margin-top: 6px; padding-left: 11px; position: relative; }
.check { width: 14px; height: 14px; margin: 6px 4px 0 0; background: #f58220; border: 1px solid #000; border-radius: 3px; }
.tbtn { width: 25px; height: 24px; border: 1px solid #ccc; border-radius: 4px; display: flex; align-items: center; justify-content: center; margin-right: 6px; background: #fff; }
.tbtn-basket { width: 29px; height: 24px; background: #337ab7; border-radius: 4px; color: #fff; --basket-gap: #337ab7; display: flex; align-items: center; justify-content: center; position: relative; }
.tbtn-basket b { position: absolute; right: 0; top: -5px; font-size: 13px; line-height: 13px; }
.tbtn-share { width: 23px; height: 23px; background: #337ab7; color: #fff; border-radius: 4px; display: flex; align-items: center; justify-content: center; margin-left: auto; margin-right: 14px; margin-top: 1px; }
.listwrap { position: relative; height: 598px; display: flex; padding-left: 12px; overflow: hidden; margin-right: 6px; }
.listwrap::after { content: ""; position: absolute; left: 40px; right: 60px; bottom: -6px; height: 16px; background: radial-gradient(ellipse at center bottom, rgba(0,0,0,.35), rgba(0,0,0,0) 70%); }
.list { list-style: none; margin: 0; padding: 5px 0 0; width: 354px; flex: none; }
.list li { height: 41.250px; margin-bottom: 6px; border-left: 6px solid #ff7f00; border-bottom: 1px solid #ccc; display: flex; font-size: 13.500px; line-height: 15px; color: #333; white-space: nowrap; padding-left: 9px; padding-top: 5px; }
.list svg { flex: none; margin: 0 4px 0 0; }
.sbar { width: 21px; flex: none; background: #f1f1f1; display: flex; flex-direction: column; align-items: center; position: relative; }
.sb-up { width: 0; height: 0; margin-top: 8px; border-left: 5px solid transparent; border-right: 5px solid transparent; border-bottom: 5px solid #a3a3a3; }
.sb-thumb { width: 17px; height: 140px; margin-top: 8px; background: #c1c1c1; }
.sb-down { position: absolute; bottom: 10px; width: 0; height: 0; border-left: 5px solid transparent; border-right: 5px solid transparent; border-top: 5px solid #505050; }
.pager-row { display: flex; align-items: flex-start; padding: 17px 0 0 71px; }
.total { color: #777; font-size: 14px; margin-top: 6px; }
.pager { margin-left: 5px; display: flex; height: 25px; border: 1px solid #ddd; border-radius: 4px; overflow: hidden; font-size: 12px; line-height: 23px; color: #337ab7; }
.pager a { padding: 0 7.500px; border-left: 1px solid #ddd; }
.pager a:first-child { border-left: 0; }
.pager .on { background: #337ab7; color: #fff; padding: 0 8px; font-weight: bold; }
.pager .dim { color: #777; }

/* map */
.basemap { display: block; }
.sea { fill: #73cef1; }
.land path, .land-fill { fill: #ecead9; }
.land .libya { fill: #eee9e1; }
.terrain path { fill: #d7dcb4; opacity: .8; }
.noise { opacity: .4; }
.minor path { fill: none; stroke: #fbfbf6; stroke-opacity: .75; stroke-width: 3.500; stroke-linejoin: round; }
.border path { fill: none; stroke: #9aa3ac; stroke-width: 4; stroke-linejoin: round; }
.border .dash { stroke-dasharray: 5 5; stroke-width: 3.500; }
.border .prov { stroke-width: 3; stroke: #b0b5b0; }
.road path { fill: none; stroke: #f3ad7c; stroke-width: 4; stroke-linejoin: round; }
.grid path { stroke: #fff; stroke-opacity: .16; stroke-width: 2; fill: none; }
.names text { font-family: Roboto, "Liberation Sans", sans-serif; paint-order: stroke; stroke: rgba(255,255,255,.55); stroke-width: 5px; stroke-linejoin: round; }
.names .city { font-size: 41px; fill: #5e5e5e; }
.names .ctry { font-size: 47px; font-weight: 700; fill: #3a3a3a; }
.names .ctry-l { font-size: 52px; }
.names .big { font-size: 48px; font-weight: 500; fill: #555; }
.names .greece { font-size: 64px; font-weight: 700; fill: #222; }
.names .wsea { font-size: 42px; font-style: italic; fill: #a9def3; stroke: none; }
.names .wsea-l { font-size: 58px; font-style: normal; }
.dots circle { fill: #111; stroke: #fff; stroke-width: 1.500; }
.fp path { fill: none; stroke: #ff7f00; stroke-width: 5; }
.fp .fp-box { stroke: #eb9fc6; stroke-width: 9; stroke-dasharray: 26 18; opacity: .85; }
.bars-tall rect, .bars-sp rect { fill: url(#sparse); }
.bars-de { fill: url(#dense); }

.search { position: absolute; left: 8px; top: 9px; width: 257px; height: 28px; display: flex; border: 1px solid #ccc; border-radius: 4px; overflow: hidden; background: #fff; }
.search-ic { width: 31px; background: #eee; border-right: 1px solid #ccc; display: flex; align-items: center; justify-content: center; }
.search-in { padding-left: 10px; line-height: 26px; color: #999; font-size: 14px; }
.tags { position: absolute; left: 295px; top: 19px; display: flex; gap: 11px; }
.tag { height: 16px; border-radius: 3px; color: #fff; font: bold 10px/16px "Roboto", "Liberation Sans", sans-serif; text-align: center; letter-spacing: .3px; }
.tag-s { width: 72px; background: #999; }
.tag-e { width: 125px; background: #00f; }
.tag-o { width: 72px; background: #808080; }
.toggle { position: absolute; width: 14px; height: 34px; padding: 0; border: 0; background: #fff; }
.toggle::before { content: ""; position: absolute; top: 12px; width: 0; height: 0; border-top: 5px solid transparent; border-bottom: 5px solid transparent; }
.toggle-l { left: 0; top: 45px; }
.toggle-l::before { left: 3px; border-right: 5px solid #333; }
.toggle-r { right: 0; top: 62px; width: 12px; }
.toggle-r::before { left: 4px; border-left: 5px solid #333; }
.layers { position: absolute; left: 790px; top: 11px; width: 40px; height: 41px; background: #fff; border-radius: 5px; box-shadow: 0 0 2px rgba(0,0,0,.2); display: flex; align-items: center; justify-content: center; }

.tl-label { position: absolute; top: 752px; width: 94px; height: 26px; background: linear-gradient(#dedede, #a9a9a9); color: #444; font-size: 16px; line-height: 26px; text-align: center; }
.tl-label::after { content: ""; position: absolute; top: 26px; width: 0; height: 0; border-left: 6px solid transparent; border-right: 6px solid transparent; border-top: 7px solid #adadad; }
.tl-label-a { left: 58px; }
.tl-label-a::after { left: 40px; }
.tl-label-b { left: 691px; }
.tl-label-b::after { left: 41px; }
.tl-bar { position: absolute; left: 109px; top: 786px; width: 623px; height: 22px; background: #c2c3cf; border-top: 2px solid #6eaccd; border-bottom: 2px solid #6eaccd; }
.tl-handle { position: absolute; top: 785px; width: 7px; height: 25px; background: #6a9fbc; }
.tl-handle-a { left: 102px; }
.tl-handle-b { left: 732px; }
.tl-arrow { position: absolute; top: 790px; width: 0; height: 0; border-top: 7px solid transparent; border-bottom: 7px solid transparent; }
.tl-arrow-a { left: 94px; border-right: 8px solid #93a0a8; }
.tl-arrow-b { left: 739px; border-left: 8px solid #93a0a8; }
.coords { position: absolute; left: 0; bottom: 0; width: 139px; height: 18px; background: #e4f4fb; border-top-right-radius: 5px; font-size: 12px; line-height: 18px; padding-left: 4px; color: #444; white-space: nowrap; }
.scale { position: absolute; right: 0; bottom: 19px; width: 63px; height: 19px; background: #b5e5f7; border: 2px solid #777; border-top: 0; font-size: 12px; line-height: 17px; text-align: center; color: #333; }
.attr { position: absolute; right: 0; bottom: 0; width: 58px; height: 17px; background: #e4f4fb; border-top-left-radius: 5px; font-size: 12px; line-height: 17px; text-align: center; color: #444; }

/* right panel */
.ps-title { margin: 0 -6px 0 -6px; height: 35px; flex: none; border-bottom: 1px solid #999; font-size: 20px; font-weight: normal; line-height: 45px; white-space: nowrap; }
.svc { display: flex; margin-top: 22px; height: 56px; flex: none; }
.svc-back { margin: 5px 10px 0 0; flex: none; }
.svc-icon { width: 57px; height: 56px; background: #fff; border-radius: 6px; color: #222; text-align: center; font-size: 8.500px; line-height: 9.500px; padding-top: 3px; display: flex; flex-direction: column; align-items: center; }
.svc-head { margin-left: 11px; }
.svc-name { font-size: 27px; line-height: 28px; margin-top: 0; white-space: nowrap; }
.svc-id { font-size: 11.200px; line-height: 14px; margin-top: 17px; color: #ddd; white-space: nowrap; }
.publisher { margin-top: 12px; font-size: 11.300px; line-height: 14px; color: #ddd; flex: none; }
.version { margin-top: 9px; font-size: 18px; line-height: 20px; flex: none; }
.desc { margin-top: 18px; font-size: 19.100px; line-height: 24px; flex: none; white-space: nowrap; }
.svc-share { margin-top: 6px; width: 27px; height: 28px; background: #fff; color: #222; border-radius: 5px; display: flex; align-items: center; justify-content: center; flex: none; }
.actions { display: flex; margin-top: 26px; gap: 13px; flex: none; }
.act { width: 128px; height: 34px; background: #fff; color: #333; border: 1px solid #ccc; border-radius: 4px; display: flex; align-items: center; justify-content: center; gap: 3px; }
.act2 { width: 129px; }
.lbl { display: block; flex: none; margin-top: 6px; font-size: 15.600px; font-weight: bold; line-height: 20px; height: 20px; }
.lbl + .ig { margin-top: 8px; }
.ig + .lbl { margin-top: 12px; }
.lbl-clear { margin-bottom: 4px; }
.lbl-3 { margin-top: 16px; }
.lbl-after { margin-top: 11px; }
.clear { margin-left: 4px; font-size: 13.500px; color: #ccc; }
.clear svg { vertical-align: -1px; }
.ig { display: flex; flex: none; width: 618px; height: 33.500px; background: #fff; border-radius: 4px; border: 1px solid #ccc; overflow: hidden; }
.ig-add { width: 49px; flex: none; border-right: 1px solid #ccc; color: #222; display: flex; align-items: center; justify-content: center; gap: 1px; }
.ig-in { padding-left: 11px; font-size: 13.500px; line-height: 31px; color: #555; }
.plus { margin-top: 5px; height: 14px; flex: none; }
.plus svg { display: block; }
.dem { display: block; flex: none; margin-top: 7px; width: 225px; height: 39px; padding: 0 14px; font: 15.600px "Liberation Sans", Arial, sans-serif; color: #555; background: #fff; border: 1px solid #ccc; border-radius: 4px; }
```
